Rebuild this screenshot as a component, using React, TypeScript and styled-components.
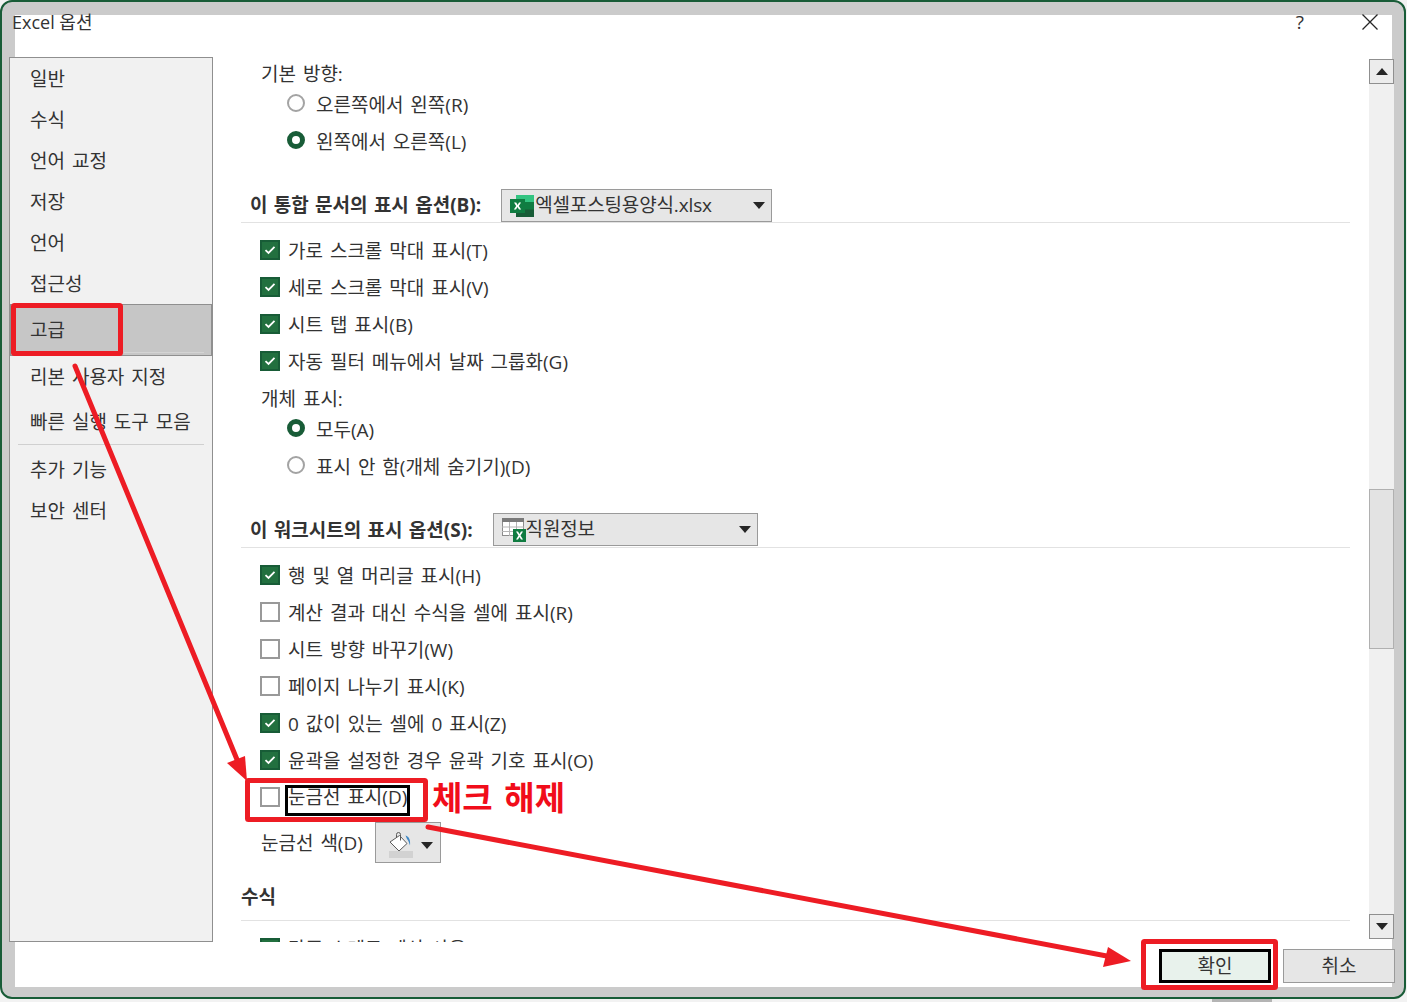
import styled, { createGlobalStyle } from "styled-components";

const GlobalStyle = createGlobalStyle`
  html, body {
    margin: 0;
    padding: 0;
    background: #f2f2f2;
  }
  * {
    box-sizing: border-box;
  }
`;

const FONT = `"Open Sans", "Noto Sans CJK KR", sans-serif`;
const GREEN = "#185c37";
const RED = "#ed1c24";

const topChecks = [
  { label: "가로 스크롤 막대 표시", key: "(T)", on: true },
  { label: "세로 스크롤 막대 표시", key: "(V)", on: true },
  { label: "시트 탭 표시", key: "(B)", on: true },
  { label: "자동 필터 메뉴에서 날짜 그룹화", key: "(G)", on: true },
];

const sheetChecks = [
  { label: "행 및 열 머리글 표시", key: "(H)", on: true },
  { label: "계산 결과 대신 수식을 셀에 표시", key: "(R)", on: false },
  { label: "시트 방향 바꾸기", key: "(W)", on: false },
  { label: "페이지 나누기 표시", key: "(K)", on: false },
  { label: "0 값이 있는 셀에 0 표시", key: "(Z)", on: true },
  { label: "윤곽을 설정한 경우 윤곽 기호 표시", key: "(O)", on: true },
];

const CheckIcon = () => (
  <svg width="12" height="10" viewBox="0 0 12 10" fill="none">
    <path d="M1.5 5.2 4.5 8 10.5 1.8" stroke="#fff" strokeWidth="1.8" />
  </svg>
);

const Caret = () => (
  <svg width="12" height="7" viewBox="0 0 12 7">
    <path d="M0 0h12L6 7z" fill="#262626" />
  </svg>
);

const ExcelIcon = () => (
  <svg width="25" height="22" viewBox="0 0 25 22">
    <rect x="6" y="0" width="18" height="7.5" fill="#33c481" />
    <rect x="6" y="7" width="9" height="8" fill="#21a366" />
    <rect x="15" y="7" width="9" height="8" fill="#107c41" />
    <rect x="6" y="14.5" width="18" height="7.5" fill="#185c37" />
    <rect x="0" y="4" width="15" height="14" fill="#107c41" />
    <path d="M4 7.5h2.2L7.6 10l1.4-2.5h2.1l-2.3 3.5 2.4 3.6H9L7.5 12l-1.5 2.6H3.800l2.400-3.600z" fill="#fff" />
  </svg>
);

const SheetIcon = () => (
  <svg width="24" height="24" viewBox="0 0 24 24">
    <rect x="0.500" y="0.500" width="21" height="17" fill="#fff" stroke="#8c8c8c" />
    <rect x="0" y="0" width="22" height="4" fill="#7a7a7a" />
    <path d="M7.500 4v14M14.500 4v14M0 9h22M0 13.500h22" stroke="#b5b5b5" />
    <rect x="11" y="11" width="13" height="13" fill="#107c41" />
    <path d="M14 13.500h2l1.500 2.500 1.500-2.500h2l-2.500 4 2.500 4h-2L17.500 19 16 21.500h-2l2.500-4z" fill="#fff" />
  </svg>
);

const BucketIcon = () => (
  <svg width="24" height="26" viewBox="0 0 24 26">
    <rect x="0" y="19" width="24" height="7" fill="#d2d2d2" />
    <path d="M1 10 10.500 3.500 18 11.500 10 19z" fill="#fff" stroke="#5a5a5a" />
    <path d="M7.500 5.500V2.500a2 2 0 0 1 4 0v6" fill="none" stroke="#5a5a5a" />
    <path d="M16.500 3.500c3.500 1 5 4 4.500 10-1-3-1.500-5-3-6.500z" fill="#3f87c4" />
  </svg>
);

const App = () => {
  return (
    <Page>
      <GlobalStyle />
      <Frame>
        <Panel>
          <TitleRow>
            <Title>Excel 옵션</Title>
            <HelpMark>?</HelpMark>
            <svg width="16" height="16" viewBox="0 0 16 16" fill="none">
              <path d="M.5.500l15 15M15.500.500l-15 15" stroke="#262626" strokeWidth="1.300" />
            </svg>
          </TitleRow>
          <Body>
            <Sidebar>
              {["일반", "수식", "언어 교정", "저장", "언어", "접근성"].map((item) => (
                <NavItem key={item}>{item}</NavItem>
              ))}
              <NavItem $selected>고급</NavItem>
              <NavItem>리본 사용자 지정</NavItem>
              <NavItem $gap>빠른 실행 도구 모음</NavItem>
              <NavDivider />
              <NavItem $gap>추가 기능</NavItem>
              <NavItem>보안 센터</NavItem>
            </Sidebar>
            <Content>
              <OptionLabel $first>기본 방향:</OptionLabel>
              <RadioRow>
                <RadioMark />
                <span>오른쪽에서 왼쪽(R)</span>
              </RadioRow>
              <RadioRow>
                <RadioMark $on />
                <span>왼쪽에서 오른쪽(L)</span>
              </RadioRow>
              <SectionHead>
                <HeadText>이 통합 문서의 표시 옵션(B):</HeadText>
                <Select $width={271}>
                  <ExcelIcon />
                  <SelectText>엑셀포스팅용양식.xlsx</SelectText>
                  <Caret />
                </Select>
              </SectionHead>
              <CheckList>
                {topChecks.map((row) => (
                  <CheckRow key={row.label}>
                    <CheckMark $on={row.on}>{row.on && <CheckIcon />}</CheckMark>
                    <span>
                      {row.label}
                      {row.key}
                    </span>
                  </CheckRow>
                ))}
              </CheckList>
              <OptionLabel>개체 표시:</OptionLabel>
              <RadioGroup>
                <RadioRow>
                  <RadioMark $on />
                  <span>모두(A)</span>
                </RadioRow>
                <RadioRow>
                  <RadioMark />
                  <span>표시 안 함(개체 숨기기)(D)</span>
                </RadioRow>
              </RadioGroup>
              <SectionHead>
                <HeadText>이 워크시트의 표시 옵션(S):</HeadText>
                <Select $width={265} $lift>
                  <SheetIcon />
                  <SelectText>직원정보</SelectText>
                  <Caret />
                </Select>
              </SectionHead>
              <CheckList>
                {sheetChecks.map((row) => (
                  <CheckRow key={row.label}>
                    <CheckMark $on={row.on}>{row.on && <CheckIcon />}</CheckMark>
                    <span>
                      {row.label}
                      {row.key}
                    </span>
                  </CheckRow>
                ))}
                <CheckRow>
                  <CheckMark />
                  <FocusText>눈금선 표시(D)</FocusText>
                </CheckRow>
              </CheckList>
              <ColorRow>
                <span>눈금선 색(D)</span>
                <ColorButton>
                  <BucketIcon />
                  <Caret />
                </ColorButton>
              </ColorRow>
              <FormulaHead>수식</FormulaHead>
              <CheckList>
                <CheckRow>
                  <CheckMark $on>
                    <CheckIcon />
                  </CheckMark>
                  <span>다중 스레드 계산 사용(M)</span>
                </CheckRow>
              </CheckList>
            </Content>
            <Scrollbar>
              <ScrollButton>
                <svg width="12" height="7" viewBox="0 0 12 7">
                  <path d="M0 7h12L6 0z" fill="#262626" />
                </svg>
              </ScrollButton>
              <ScrollThumb />
              <ScrollButton $end>
                <Caret />
              </ScrollButton>
            </Scrollbar>
          </Body>
          <Footer>
            <DialogButton $primary>확인</DialogButton>
            <DialogButton>취소</DialogButton>
          </Footer>
        </Panel>
      </Frame>
      <TaskbarScrap />
      <Annotations>
        <svg width="1407" height="1002" viewBox="0 0 1407 1002" fill="none">
          <rect x="13.500" y="305.500" width="107" height="48" rx="1" stroke={RED} strokeWidth="5" />
          <rect x="247.500" y="780.500" width="178" height="39" rx="1" stroke={RED} strokeWidth="5" />
          <rect x="1143.500" y="941.500" width="132" height="46" rx="1" stroke={RED} strokeWidth="5" />
          <path d="M75 366 238 762" stroke={RED} strokeWidth="5" strokeLinecap="round" />
          <path d="M227 763 245 756 247 781z" fill={RED} />
          <path d="M428 827 1112 957" stroke={RED} strokeWidth="5" strokeLinecap="round" />
          <path d="M1108 947 1131 961 1103 967z" fill={RED} />
        </svg>
        <Callout>체크 해제</Callout>
      </Annotations>
    </Page>
  );
};

// #region styled-components

const Page = styled.div`
  position: relative;
  width: 1407px;
  height: 1002px;
  overflow: hidden;
  font-family: ${FONT};
  font-size: 19px;
  word-spacing: 2px;
  color: #333;
`;

const Frame = styled.div`
  width: 1406px;
  height: 999px;
  padding: 13px 12px 10px 13px;
  background: #cbcbcb;
  border: 2px solid ${GREEN};
  border-radius: 12px;
`;

const Panel = styled.div`
  height: 100%;
  display: flex;
  flex-direction: column;
  background: #fff;
`;

const TitleRow = styled.div`
  flex: none;
  height: 42px;
  display: flex;
  align-items: flex-start;
  padding-right: 14px;
  svg {
    margin-top: -1px;
  }
`;

const Title = styled.div`
  margin-left: -3px;
  height: 14px;
  line-height: 14px;
  font-size: 18px;
  word-spacing: 0;
  white-space: nowrap;
`;

const HelpMark = styled.div`
  margin-left: auto;
  margin-right: 58px;
  height: 14px;
  line-height: 14px;
  font-size: 19px;
`;

const Body = styled.div`
  flex: none;
  height: 885px;
  display: flex;
`;

const Sidebar = styled.nav`
  flex: none;
  width: 204px;
  margin-left: -6px;
  background: #f1f1f1;
  border: 1px solid #8f8f8f;
`;

const NavItem = styled.div<{ $selected?: boolean; $gap?: boolean }>`
  position: relative;
  height: ${(p) => (p.$selected ? "52px" : "41px")};
  margin-top: ${(p) => (p.$gap ? "4px" : "0")};
  padding: 0 0 2px 20px;
  display: flex;
  align-items: center;
  white-space: nowrap;
  background: ${(p) => (p.$selected ? "#c6c6c6" : "transparent")};
  box-shadow: ${(p) => (p.$selected ? "inset 0 0 0 1px #8f8f8f" : "none")};
  &::after {
    content: "";
    display: ${(p) => (p.$selected ? "block" : "none")};
    position: absolute;
    right: 8px;
    bottom: 3px;
    width: 80px;
    height: 1px;
    background: #d4d4d4;
  }
`;

const NavDivider = styled.div`
  height: 1px;
  margin: 2px 8px 0;
  background: #d0d0d0;
`;

const Content = styled.main`
  flex: 1;
  min-width: 0;
  padding: 0 19px 0 28px;
  overflow: hidden;
`;

const OptionLabel = styled.div<{ $first?: boolean }>`
  height: ${(p) => (p.$first ? "29px" : "37px")};
  padding: ${(p) => (p.$first ? "3px 0 0 20px" : "0 0 2px 20px")};
  display: flex;
  align-items: center;
`;

const RadioGroup = styled.div`
  margin-top: -6px;
`;

const RadioRow = styled.div`
  height: 37px;
  padding: 0 0 2px 46px;
  display: flex;
  align-items: center;
  gap: 11px;
  white-space: nowrap;
`;

const RadioMark = styled.span<{ $on?: boolean }>`
  flex: none;
  width: 18px;
  height: 18px;
  margin-top: -1px;
  border-radius: 50%;
  background: #fff;
  border: ${(p) => (p.$on ? `5px solid ${GREEN}` : "2px solid #a3a3a3")};
`;

const SectionHead = styled.div`
  height: 34px;
  margin-top: 29px;
  padding-left: 9px;
  display: flex;
  align-items: flex-start;
  gap: 20px;
  border-bottom: 1px solid #e2e2e2;
`;

const HeadText = styled.div`
  height: 27px;
  display: flex;
  align-items: center;
  margin-top: 1px;
  font-weight: 700;
  word-spacing: 1.4px;
  white-space: nowrap;
`;

const Select = styled.div<{ $width: number; $lift?: boolean }>`
  flex: none;
  width: ${(p) => p.$width}px;
  height: 33px;
  margin-top: ${(p) => (p.$lift ? "-1px" : "0")};
  padding: 0 6px 0 8px;
  display: flex;
  align-items: center;
  background: #e6e6e6;
  border: 1px solid #9a9a9a;
`;

const SelectText = styled.span`
  margin-right: auto;
  padding-bottom: 3px;
  letter-spacing: -0.15px;
  white-space: nowrap;
`;

const CheckList = styled.div`
  margin-top: 9px;
`;

const CheckRow = styled.div`
  height: 37px;
  padding: 0 0 2px 19px;
  display: flex;
  align-items: center;
  gap: 8px;
  white-space: nowrap;
`;

const CheckMark = styled.span<{ $on?: boolean }>`
  flex: none;
  width: 20px;
  height: 20px;
  display: flex;
  align-items: center;
  justify-content: center;
  background: ${(p) => (p.$on ? "#22703f" : "#fff")};
  border: 2px solid ${(p) => (p.$on ? GREEN : "#999")};
`;

const FocusText = styled.span`
  height: 25px;
  margin-top: 8px;
  line-height: 18px;
  outline: 3px solid #000;
`;

const ColorRow = styled.div`
  height: 41px;
  margin-top: 6px;
  padding-left: 20px;
  display: flex;
  align-items: center;
  gap: 12px;
  span {
    padding-bottom: 2px;
  }
`;

const ColorButton = styled.div`
  width: 66px;
  height: 41px;
  padding: 5px 7px 0 13px;
  display: flex;
  align-items: center;
  justify-content: space-between;
  background: #e6e6e6;
  border: 1px solid #9a9a9a;
`;

const FormulaHead = styled.div`
  height: 58px;
  padding-top: 8px;
  display: flex;
  align-items: center;
  font-weight: 700;
  border-bottom: 1px solid #e2e2e2;
`;

const Scrollbar = styled.div`
  flex: none;
  width: 25px;
  height: 880px;
  margin: 2px -2px 0 0;
  display: flex;
  flex-direction: column;
  background: #f0f0f0;
`;

const ScrollButton = styled.div<{ $end?: boolean }>`
  flex: none;
  height: 25px;
  margin-top: ${(p) => (p.$end ? "auto" : "0")};
  display: flex;
  align-items: center;
  justify-content: center;
  background: #ececec;
  border: 1px solid #8f8f8f;
`;

const ScrollThumb = styled.div`
  flex: none;
  height: 160px;
  margin-top: 405px;
  background: #e3e3e3;
  border: 1px solid #b0b0b0;
`;

const Footer = styled.div`
  flex: 1;
  padding: 7px 0 0;
  margin-right: -3px;
  display: flex;
  align-items: flex-start;
  justify-content: flex-end;
  gap: 12px;
`;

const DialogButton = styled.div<{ $primary?: boolean }>`
  width: 112px;
  height: 34px;
  padding-bottom: 2px;
  display: flex;
  align-items: center;
  justify-content: center;
  background: ${(p) => (p.$primary ? "#e8f2ec" : "#e6e6e6")};
  border: ${(p) => (p.$primary ? "3px solid #000" : "1px solid #9a9a9a")};
`;

const TaskbarScrap = styled.div`
  position: absolute;
  left: 1212px;
  bottom: 0;
  width: 60px;
  height: 3px;
  background: #b4b4b4;
`;

const Annotations = styled.div`
  position: absolute;
  inset: 0;
  pointer-events: none;
`;

const Callout = styled.div`
  position: absolute;
  left: 432px;
  top: 774px;
  font-size: 33px;
  line-height: 48px;
  font-weight: 700;
  word-spacing: 3px;
  color: #f10d1a;
  white-space: nowrap;
`;

// #endregion

export default App;
